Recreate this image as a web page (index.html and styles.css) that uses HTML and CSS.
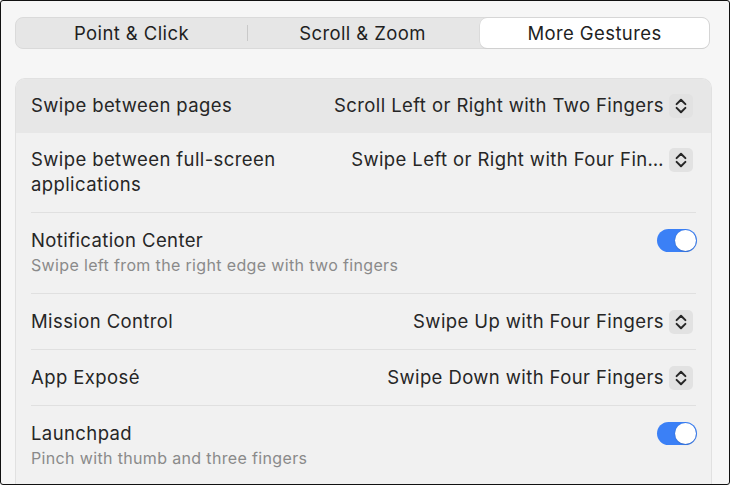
FILE: index.html
```html
<!DOCTYPE html>
<html lang="en">
<head>
<meta charset="utf-8">
<title>Trackpad — More Gestures</title>
<link rel="stylesheet" href="styles.css">
</head>
<body>
<div class="window">
  <div class="segmented">
    <div class="seg">Point &amp; Click</div>
    <div class="seg divided">Scroll &amp; Zoom</div>
    <div class="seg active">More Gestures</div>
  </div>

  <div class="panel">
    <div class="row highlighted">
      <div class="row-inner">
        <div class="label"><div class="title">Swipe between pages</div></div>
        <div class="popup">
          <span class="popup-text">Scroll Left or Right with Two Fingers</span>
          <span class="stepper"><svg viewBox="0 0 24 24" width="24" height="24"><path d="M7.6 10.1 L12 5.7 L16.4 10.1 M7.6 13.9 L12 18.3 L16.4 13.9" fill="none" stroke="#262626" stroke-width="2" stroke-linecap="round" stroke-linejoin="round"/></svg></span>
        </div>
      </div>
    </div>

    <div class="row first">
      <div class="row-inner">
        <div class="label"><div class="title">Swipe between full-screen applications</div></div>
        <div class="popup">
          <span class="popup-text">Swipe Left or Right with Four Fin…</span>
          <span class="stepper"><svg viewBox="0 0 24 24" width="24" height="24"><path d="M7.6 10.1 L12 5.7 L16.4 10.1 M7.6 13.9 L12 18.3 L16.4 13.9" fill="none" stroke="#262626" stroke-width="2" stroke-linecap="round" stroke-linejoin="round"/></svg></span>
        </div>
      </div>
    </div>

    <div class="row">
      <div class="row-inner">
        <div class="label">
          <div class="title">Notification Center</div>
          <div class="subtitle">Swipe left from the right edge with two fingers</div>
        </div>
        <div class="toggle on"><span class="knob"></span></div>
      </div>
    </div>

    <div class="row">
      <div class="row-inner">
        <div class="label"><div class="title">Mission Control</div></div>
        <div class="popup">
          <span class="popup-text">Swipe Up with Four Fingers</span>
          <span class="stepper"><svg viewBox="0 0 24 24" width="24" height="24"><path d="M7.6 10.1 L12 5.7 L16.4 10.1 M7.6 13.9 L12 18.3 L16.4 13.9" fill="none" stroke="#262626" stroke-width="2" stroke-linecap="round" stroke-linejoin="round"/></svg></span>
        </div>
      </div>
    </div>

    <div class="row">
      <div class="row-inner">
        <div class="label"><div class="title">App Exposé</div></div>
        <div class="popup">
          <span class="popup-text">Swipe Down with Four Fingers</span>
          <span class="stepper"><svg viewBox="0 0 24 24" width="24" height="24"><path d="M7.6 10.1 L12 5.7 L16.4 10.1 M7.6 13.9 L12 18.3 L16.4 13.9" fill="none" stroke="#262626" stroke-width="2" stroke-linecap="round" stroke-linejoin="round"/></svg></span>
        </div>
      </div>
    </div>

    <div class="row">
      <div class="row-inner">
        <div class="label">
          <div class="title">Launchpad</div>
          <div class="subtitle">Pinch with thumb and three fingers</div>
        </div>
        <div class="toggle on"><span class="knob"></span></div>
      </div>
    </div>
  </div>
</div>
</body>
</html>
```

FILE: styles.css
```css
* { box-sizing: border-box; }

html, body {
  margin: 0;
  padding: 0;
  background: #f5f5f5;
}

body {
  font-family: Inter, "Noto Sans", "Liberation Sans", sans-serif;
  color: #262626;
}

.window {
  width: 730px;
  height: 485px;
  overflow: hidden;
  border: 1px solid #111;
  border-radius: 3px;
  background: #f6f6f6;
  padding: 16px 19px 0 14px;
}

/* Segmented control */
.segmented {
  display: grid;
  grid-template-columns: 1fr 1fr 1fr;
  height: 32px;
  background: #e6e6e6;
  border: 1px solid #dadada;
  border-radius: 8px;
}

.seg {
  display: flex;
  align-items: center;
  justify-content: center;
  font-size: 18.5px;
  letter-spacing: 0.4px;
  color: #1f1f1f;
  position: relative;
}

.seg.divided::before {
  content: "";
  position: absolute;
  left: 0;
  top: 7px;
  bottom: 7px;
  width: 1px;
  background: #c9c9c9;
}

.seg.active {
  background: #ffffff;
  border-radius: 7px;
  margin: 0 0 0 2px;
  box-shadow: 0 0 0 0.5px #d2d2d2, 0 1px 1px rgba(0,0,0,0.06);
}

/* Panel */
.panel {
  margin-top: 29px;
  margin-right: -2px;
  background: #f1f1f1;
  border: 1px solid #e1e1e1;
  border-bottom: none;
  border-radius: 10px 10px 0 0;
  height: 420px;
  overflow: hidden;
}

.row {
  padding: 0 15px;
}

.row.highlighted {
  background: #e7e7e7;
}

.row-inner {
  display: flex;
  align-items: flex-start;
  justify-content: space-between;
  gap: 16px;
  padding: 15px 0;
  border-top: 1px solid #e0e0e0;
}

.row.highlighted .row-inner,
.row.first .row-inner {
  border-top: none;
  padding: 14px 0 15px;
}

.label {
  flex: 1 1 auto;
  min-width: 0;
}

.title {
  font-size: 18.5px;
  letter-spacing: 0.4px;
  line-height: 25px;
  color: #262626;
}

.subtitle {
  font-size: 16px;
  letter-spacing: 0.35px;
  line-height: 25px;
  color: #8a8a8a;
}

/* Popup buttons */
.popup {
  flex: 0 0 auto;
  display: flex;
  align-items: center;
  gap: 5px;
  height: 25px;
  margin-right: 3px;
}

.popup-text {
  font-size: 18.5px;
  letter-spacing: 0.4px;
  line-height: 25px;
  color: #262626;
  white-space: nowrap;
}

.stepper {
  display: flex;
  width: 24px;
  height: 24px;
  align-items: center;
  justify-content: center;
  background: #e2e2e2;
  border-radius: 5px;
}

.stepper svg {
  display: block;
}

/* Toggle */
.toggle {
  flex: 0 0 auto;
  width: 40px;
  height: 23px;
  border-radius: 12px;
  background: #3b80f6;
  padding: 1px;
  display: flex;
  justify-content: flex-end;
  margin-top: 1px;
  margin-right: -1px;
}

.knob {
  width: 21px;
  height: 21px;
  border-radius: 50%;
  background: #ffffff;
  box-shadow: 0 0.5px 1.5px rgba(0,0,0,0.25);
}
```
